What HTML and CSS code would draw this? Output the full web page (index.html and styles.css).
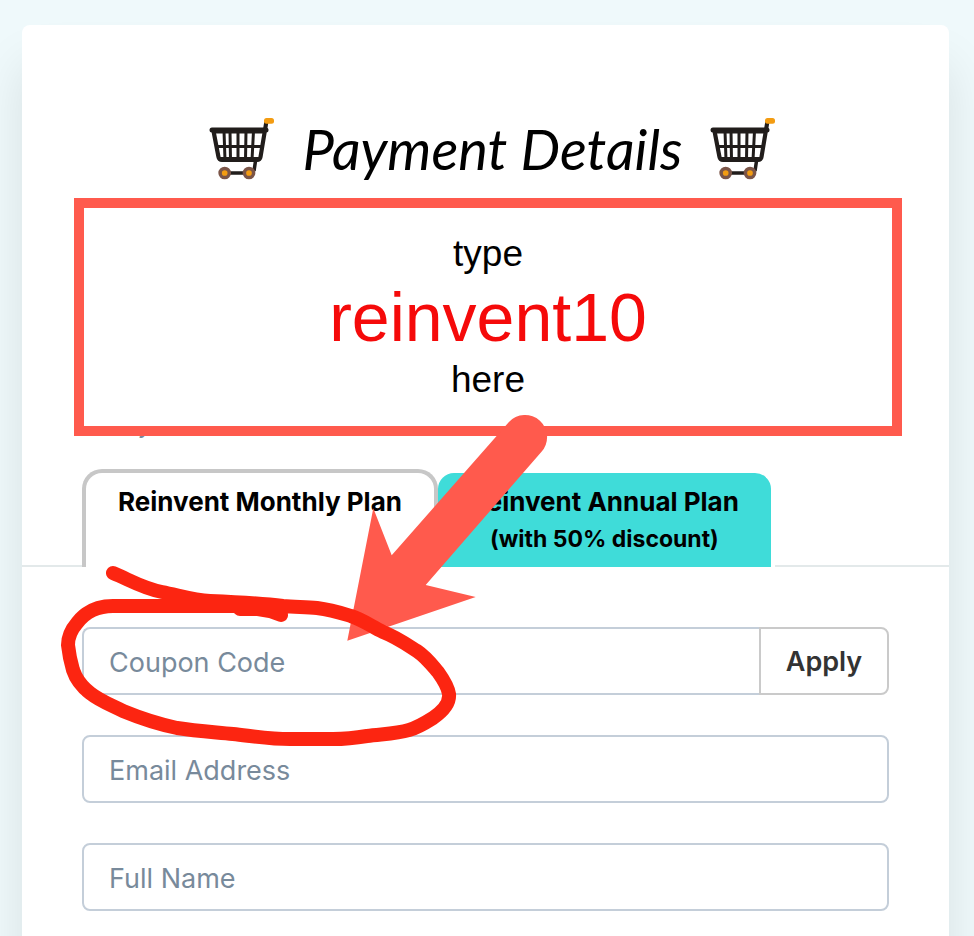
FILE: index.html
```html
<!DOCTYPE html>
<html lang="en">
<head>
  <meta charset="UTF-8" />
  <meta name="viewport" content="width=device-width, initial-scale=1" />
  <title>Payment Details</title>
  <link rel="stylesheet" href="styles.css">
</head>
<body>

  <!-- Shared cart icon -->
  <svg class="sprite" aria-hidden="true">
    <symbol id="cart" viewBox="0 0 66 64">
      <path d="M3 13H57" stroke="#211d1b" stroke-width="5" stroke-linecap="round" />
      <path d="M4.500 14L9.500 40Q10 43 13 43H48Q51 43 51.500 40L57.500 4" fill="none" stroke="#211d1b" stroke-width="4.200" />
      <path d="M15 14L16 43M21 14L21.500 43M29 14V43M37 14L36.500 43M44.500 14L43 43M8 29.500H53M9 41.500H51M6 15H55" fill="none" stroke="#211d1b" stroke-width="3" />
      <path d="M46.500 44L45 54M18 56H40" stroke="#211d1b" stroke-width="3.500" />
      <circle cx="15.700" cy="56" r="4.600" fill="#f39c12" stroke="#7b5548" stroke-width="3.500" />
      <circle cx="40" cy="56" r="4.600" fill="#f39c12" stroke="#7b5548" stroke-width="3.500" />
      <rect x="55" y="1" width="10" height="5.800" rx="2.500" fill="#f39c12" />
    </symbol>
  </svg>

  <main class="card">
    <header class="card-header">
      <svg class="cart"><use href="#cart" /></svg>
      <h1>Payment Details</h1>
      <svg class="cart"><use href="#cart" /></svg>
    </header>

    <p class="summary">Today</p>

    <div class="tabs" role="tablist">
      <button class="tab active" type="button" role="tab" aria-selected="true">Reinvent Monthly Plan</button>
      <button class="tab annual" type="button" role="tab" aria-selected="false">Reinvent Annual Plan <small>(with 50% discount)</small></button>
    </div>

    <form class="fields">
      <div class="coupon">
        <input class="field" type="text" placeholder="Coupon Code" aria-label="Coupon Code">
        <button class="apply" type="button">Apply</button>
      </div>
      <input class="field" type="email" placeholder="Email Address" aria-label="Email Address">
      <input class="field" type="text" placeholder="Full Name" aria-label="Full Name">
    </form>

    <!-- Coupon hint over the form -->
    <div class="callout">
      <span>type</span>
      <strong>reinvent10</strong>
      <span>here</span>
    </div>
    <svg class="marks" viewBox="50 400 510 360" aria-hidden="true">
      <path fill="#ff5a4d" d="M508.700 422.200A22 22 0 1 1 541.300 452L425.700 585L475.700 597L347.300 640.700L373.300 508.300L391.700 555.300Z" />
      <path class="scribble" d="M113 573C130 580 142 588 162 592C178 595 193 600 210 601C235 602 259 603 283 606C295 607 306 607 317 608C332 610 341 613 351 616C363 620 371 626 383 632C396 637 406 644 417 651C426 657 432 665 438 672C443 679 448 687 449 694C450 703 443 711 433 718C422 725 416 728 409 730C396 734 381 734 367 736C355 738 345 739 333 739H290C269 739 252 736 233 734C213 732 196 731 177 728C158 724 140 718 123 711C111 705 100 701 90 693C81 686 76 679 73 670C70 660 69 654 68 645C68 637 71 630 77 623C86 611 99 606 113 606H237L240 609H258L270 611L281 615" />
    </svg>
  </main>

</body>
</html>
```
FILE: styles.css
```css
* {
  box-sizing: border-box;
}

body {
  margin: 0;
  padding: 25px 25px 0 22px;
  background: #eff9fb;
  color: #000;
  font-family: Inter, "Helvetica Neue", Arial, sans-serif;
}

.sprite {
  display: none;
}

.card {
  position: relative;
  padding: 60px 0 40px;
  background: #fff;
  border-radius: 8px;
  box-shadow: 0 40px 50px rgba(0, 0, 0, 0.1);
}

/* Header */
.card-header {
  display: flex;
  justify-content: center;
  align-items: center;
  gap: 28px;
  padding-left: 14px;
}

.cart {
  width: 66px;
  height: 64px;
  flex-shrink: 0;
}

h1 {
  margin: 0;
  font-family: "Lato", cursive;
  font-size: 56px;
  font-style: italic;
  font-weight: 400;
  line-height: 128px;
  white-space: nowrap;
}

.summary {
  margin: 194px 60px 0;
  color: #788a9b;
  font-size: 24px;
  line-height: 36px;
}

/* Plan tabs */
.tabs {
  display: flex;
  align-items: stretch;
  margin-top: 26px;
  padding: 0 60px;
  background: linear-gradient(#e3e9ea, #e3e9ea) bottom / 100% 2px no-repeat;
}

.tab {
  min-height: 98px;
  padding: 10px 32px;
  display: flex;
  flex-direction: column;
  align-items: center;
  background: #fff;
  border: 4px solid #c7c7c7;
  border-bottom: 0;
  border-radius: 20px 20px 0 0;
  color: #000;
  font-family: inherit;
  font-size: 26px;
  font-weight: 700;
  line-height: 38px;
  white-space: nowrap;
  cursor: pointer;
}

.tab.active {
  z-index: 1;
}

.tab.annual {
  margin-left: -4px;
  background: #3fdcd9;
  border-color: #fff;
}

.tab small {
  font-size: 23px;
  line-height: 36px;
}

/* Form */
.fields {
  display: flex;
  flex-direction: column;
  gap: 40px;
  padding: 60px 60px 0;
}

.coupon {
  display: flex;
}

.field {
  width: 100%;
  height: 68px;
  padding: 2px 25px 0;
  background: #fff;
  border: 2px solid #c4ced9;
  border-radius: 8px;
  font-family: inherit;
  font-size: 27px;
}

.field::placeholder {
  color: #788a9b;
  opacity: 1;
}

.coupon .field {
  flex: 1;
  min-width: 0;
  border-right: 0;
  border-radius: 8px 0 0 8px;
}

.apply {
  width: 130px;
  background: #fff;
  border: 2px solid #cacaca;
  border-radius: 0 8px 8px 0;
  color: #333;
  font-family: inherit;
  font-size: 27px;
  font-weight: 600;
  cursor: pointer;
}

/* Hint overlay */
.callout {
  position: absolute;
  top: 173px;
  left: 52px;
  right: 47px;
  height: 238px;
  z-index: 2;
  display: flex;
  flex-direction: column;
  align-items: center;
  justify-content: center;
  background: #fff;
  border: 10px solid #ff5a4d;
  font-family: "Liberation Sans", Arial, sans-serif;
  font-size: 37px;
  line-height: 46px;
}

.callout strong {
  color: #f50a0a;
  font-size: 68px;
  font-weight: 400;
  line-height: 80px;
}

.marks {
  position: absolute;
  top: 375px;
  left: 28px;
  width: 510px;
  height: 360px;
  z-index: 3;
  pointer-events: none;
}

.scribble {
  fill: none;
  stroke: #fc2511;
  stroke-width: 14;
  stroke-linecap: round;
  stroke-linejoin: round;
}
```
